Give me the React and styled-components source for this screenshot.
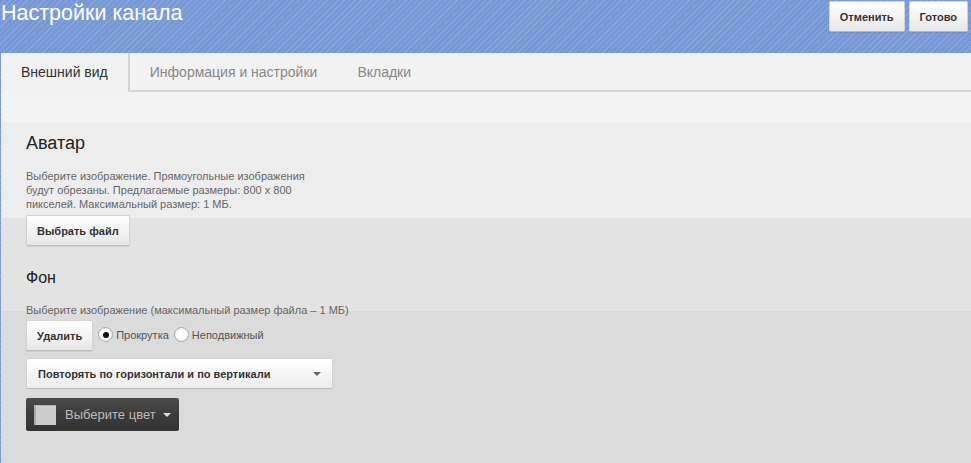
import React, { useState } from 'react';
import styled, { createGlobalStyle } from 'styled-components';

const GlobalStyle = createGlobalStyle`
  html, body {
    margin: 0;
    padding: 0;
    height: 100%;
  }
  body {
    font-family: Arial, "Liberation Sans", sans-serif;
    background-color: #7898d4;
    background-image: repeating-linear-gradient(
      135deg,
      #7898d5 0px,
      #7898d5 3px,
      #8aa7dd 3px,
      #8aa7dd 4px
    );
    overflow: hidden;
  }
  #root {
    height: 100%;
  }
`;

const tabs = ['Внешний вид', 'Информация и настройки', 'Вкладки'];

function App() {
  const [active, setActive] = useState(0);
  const [mode, setMode] = useState('scroll');

  return (
    <Page>
      <GlobalStyle />
      <Header>
        <Title>Настройки канала</Title>
        <HeaderButtons>
          <Button>Отменить</Button>
          <Button>Готово</Button>
        </HeaderButtons>
      </Header>

      <Panel>
        <TabBar>
          {tabs.map((t, i) => (
            <Tab key={t} $active={i === active} onClick={() => setActive(i)}>
              {t}
            </Tab>
          ))}
          <TabFill />
        </TabBar>

        <Content>
          <Section>
            <SectionTitle>Аватар</SectionTitle>
            <Hint $narrow>
              Выберите изображение. Прямоугольные изображения будут обрезаны.
              Предлагаемые размеры: 800 x 800 пикселей. Максимальный размер: 1 МБ.
            </Hint>
            <Button>Выбрать файл</Button>
          </Section>

          <Section $bg>
            <SectionTitle $small>Фон</SectionTitle>
            <Hint $tight>Выберите изображение (максимальный размер файла – 1 МБ)</Hint>
            <Row>
              <Button>Удалить</Button>
              <RadioLabel onClick={() => setMode('scroll')}>
                <Radio $checked={mode === 'scroll'} />
                Прокрутка
              </RadioLabel>
              <RadioLabel onClick={() => setMode('fixed')}>
                <Radio $checked={mode === 'fixed'} />
                Неподвижный
              </RadioLabel>
            </Row>
            <Select>
              Повторять по горизонтали и по вертикали
              <Arrow $color="#666" />
            </Select>
            <ColorPicker>
              <Swatch />
              <ColorText>Выберите цвет</ColorText>
              <Arrow $color="#ddd" $size={4} $push />
            </ColorPicker>
          </Section>
        </Content>
      </Panel>
    </Page>
  );
}

export default App;

const Page = styled.div`
  height: 100%;
  display: flex;
  flex-direction: column;
`;

const Header = styled.div`
  height: 53px;
  display: flex;
  justify-content: space-between;
  align-items: flex-start;
  padding: 0 3px 0 0;
  flex-shrink: 0;
`;

const Title = styled.h1`
  margin: 0;
  padding: 1px 0 0 1px;
  font-size: 21.5px;
  font-weight: normal;
  color: #fff;
  line-height: 24px;
`;

const HeaderButtons = styled.div`
  display: flex;
  gap: 4px;
  padding-top: 1px;
`;

const Button = styled.button`
  font-family: Arial, "Liberation Sans", sans-serif;
  font-size: 11px;
  font-weight: bold;
  color: #333;
  height: 31px;
  padding: 0 10px;
  border: 1px solid #d3d3d3;
  border-bottom-color: #bdbdbd;
  border-radius: 2px;
  background: linear-gradient(#fdfdfd 0%, #f4f4f4 50%, #e6e6e6 100%);
  box-shadow: 0 1px 1px rgba(0, 0, 0, 0.08);
  cursor: pointer;
  white-space: nowrap;
  display: inline-flex;
  align-items: center;
  align-self: flex-start;
`;

const Panel = styled.div`
  flex: 1;
  margin-left: 1px;
  background: #f2f2f2;
  display: flex;
  flex-direction: column;
`;

const TabBar = styled.div`
  display: flex;
  height: 39px;
  flex-shrink: 0;
`;

const Tab = styled.div`
  padding: 0 20px;
  font-size: 14px;
  line-height: 39px;
  white-space: nowrap;
  color: ${p => (p.$active ? '#333' : '#888')};
  cursor: pointer;
  border-right: ${p => (p.$active ? '2px solid #d4d4d4' : 'none')};
  border-bottom: ${p => (p.$active ? 'none' : '2px solid #d4d4d4')};
  box-sizing: border-box;
  height: 39px;
`;

const TabFill = styled.div`
  flex: 1;
  border-bottom: 2px solid #d4d4d4;
`;

const Content = styled.div`
  flex: 1;
  padding: 0 0 0 25px;
  background: linear-gradient(
    #f3f3f3 0px,
    #f3f3f3 30px,
    #ededed 30px,
    #ededed 126px,
    #e3e3e3 126px,
    #e3e3e3 219px,
    #dbdbdb 219px
  );
`;

const Section = styled.div`
  display: flex;
  flex-direction: column;
  align-items: flex-start;
  padding-top: ${p => (p.$bg ? 21 : 40)}px;
`;

const SectionTitle = styled.h2`
  margin: 0 0 ${p => (p.$small ? 14 : 15)}px;
  font-size: ${p => (p.$small ? 16 : 18)}px;
  font-weight: normal;
  color: #222;
  line-height: 22px;
`;

const Hint = styled.p`
  margin: 0 0 ${p => (p.$tight ? 3 : 4)}px;
  font-size: 11px;
  line-height: 14px;
  color: #666;
  max-width: ${p => (p.$narrow ? '285px' : 'none')};
`;

const Row = styled.div`
  display: flex;
  align-items: flex-start;
  gap: 5px;
`;

const RadioLabel = styled.label`
  display: flex;
  align-items: center;
  gap: 3px;
  font-size: 11px;
  color: #555;
  margin-top: 7px;
  cursor: pointer;
`;

const Radio = styled.span`
  width: 15px;
  height: 15px;
  border-radius: 50%;
  border: 1px solid #aaa;
  background: radial-gradient(circle, #fff 40%, #e4e4e4 100%);
  box-sizing: border-box;
  display: flex;
  align-items: center;
  justify-content: center;

  &::after {
    content: '';
    width: 6px;
    height: 6px;
    border-radius: 50%;
    background: #111;
    display: ${p => (p.$checked ? 'block' : 'none')};
  }
`;

const Select = styled.div`
  margin-top: 7px;
  width: 307px;
  height: 31px;
  box-sizing: border-box;
  padding: 0 11px 0 11px;
  display: flex;
  align-items: center;
  justify-content: space-between;
  font-size: 11px;
  font-weight: bold;
  color: #333;
  border: 1px solid #d3d3d3;
  border-bottom-color: #bdbdbd;
  border-radius: 2px;
  background: linear-gradient(#fff 0%, #f6f6f6 50%, #ececec 100%);
  cursor: pointer;
`;

const Arrow = styled.span`
  width: 0;
  height: 0;
  margin-left: ${p => (p.$push ? 'auto' : '0')};
  border-left: ${p => p.$size || 4}px solid transparent;
  border-right: ${p => p.$size || 4}px solid transparent;
  border-top: ${p => p.$size || 4}px solid ${p => p.$color};
`;

const ColorPicker = styled.div`
  margin-top: 9px;
  width: 153px;
  height: 33px;
  box-sizing: border-box;
  padding: 0 8px;
  display: flex;
  align-items: center;
  border-radius: 2px;
  background: linear-gradient(#4a4a4a 0%, #3c3c3c 50%, #333 100%);
  cursor: pointer;
`;

const Swatch = styled.span`
  width: 22px;
  height: 20px;
  flex-shrink: 0;
  box-sizing: border-box;
  background: #cdcdcd;
  border-left: 2px solid #a9a9a9;
  border-top: 1px solid #b8b8b8;
`;

const ColorText = styled.span`
  margin-left: 9px;
  font-size: 13px;
  white-space: nowrap;
  color: #bbb;
`;
